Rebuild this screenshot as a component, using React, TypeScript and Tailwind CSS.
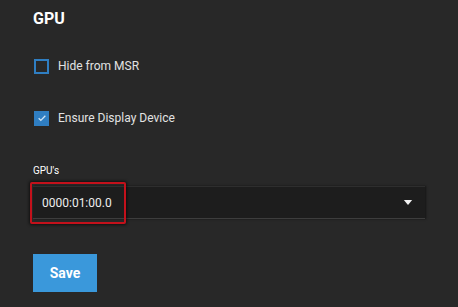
export default function App() {
  return (
    <div className="min-h-[307px] w-full bg-[#282828] px-[33px] pt-[9px] font-['Roboto',sans-serif] text-[#e2e2e2]">
      <h1 className="text-[16px] font-bold leading-[20px] text-white">GPU</h1>

      <label className="mt-[29px] flex items-center gap-[9px]">
        <span className="ml-[1px] h-[15px] w-[15px] border-2 border-[#2f7ec2]" />
        <span className="text-[12px] leading-[16px]">Hide from MSR</span>
      </label>

      <label className="mt-[36px] flex items-center gap-[9px]">
        <span className="ml-[1px] flex h-[15px] w-[15px] items-center justify-center bg-[#2f7ec2]">
          <svg viewBox="0 0 12 12" className="h-[10px] w-[10px]" fill="none" stroke="#cfe4f5" strokeWidth="1.6">
            <path d="M2 6.3l2.6 2.6L10 3.4" />
          </svg>
        </span>
        <span className="text-[12px] leading-[16px]">Ensure Display Device</span>
      </label>

      <div className="mt-[39px] text-[10px] leading-[12px] text-white">GPU's</div>

      <div className="relative mt-[9px] w-[392px]">
        <div className="flex h-[33px] items-center justify-between border-t border-[#2e2e2e] border-b border-b-[#3d3d3d] bg-[#1d1d1d] pl-[9px] pr-[12px] shadow-[1px_0_2px_#151515]">
          <span className="text-[12px] text-[#eeeeee]">0000:01:00.0</span>
          <svg viewBox="0 0 10 6" className="h-[5px] w-[10px]" fill="#f2f2f2">
            <path d="M0 0h10L5 6z" />
          </svg>
        </div>
        <div className="pointer-events-none absolute left-[-3px] top-[-4px] h-[42px] w-[96px] rounded-[2px] border-2 border-[#c3111b] shadow-[0_0_3px_1px_rgba(0,0,0,0.6)]" />
      </div>

      <button className="mt-[35px] h-[38px] w-[64px] bg-[#3a98db] text-[14px] font-bold text-white">
        Save
      </button>
    </div>
  );
}
